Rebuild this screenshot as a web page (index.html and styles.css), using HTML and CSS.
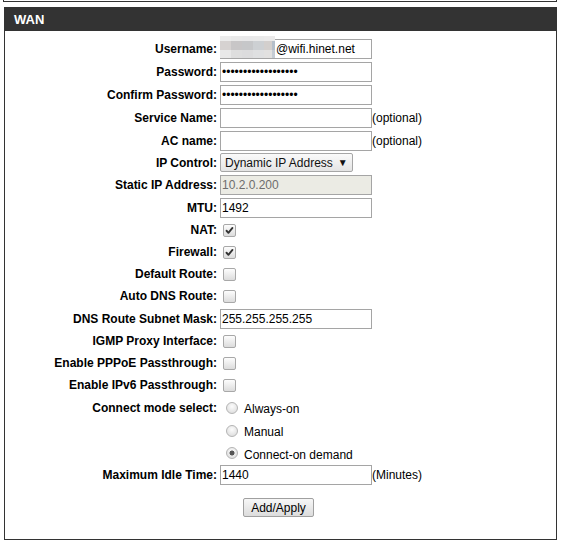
FILE: index.html
```html
<!DOCTYPE html>
<html>
<head>
<meta charset="utf-8">
<link rel="stylesheet" href="styles.css">
</head>
<body>
<div class="page">
  <div class="prevbox"></div>
  <div class="panel">
    <div class="head">WAN</div>
    <div class="body">
      <div class="form">
        <div class="row r23"><label class="lbl">Username:</label><div class="val"><span class="userbox"><span class="blur"><i class="b1"></i><i class="b2"></i><i class="b3"></i><i class="b4"></i><i class="b5"></i><i class="b6"></i><i class="b7"></i><i class="b8"></i><i class="b9"></i><i class="b10"></i><i class="b11"></i><i class="b12"></i><i class="b13"></i><i class="b14"></i><i class="b15"></i></span><span class="utext">@wifi.hinet.net</span></span></div></div>
        <div class="row r23"><label class="lbl">Password:</label><div class="val"><input class="txt" type="password" value="123456789012345678"></div></div>
        <div class="row r23"><label class="lbl">Confirm Password:</label><div class="val"><input class="txt" type="password" value="123456789012345678"></div></div>
        <div class="row r23"><label class="lbl">Service Name:</label><div class="val"><input class="txt" type="text" value=""><span class="note">(optional)</span></div></div>
        <div class="row r23"><label class="lbl">AC name:</label><div class="val"><input class="txt" type="text" value=""><span class="note">(optional)</span></div></div>
        <div class="row r21"><label class="lbl">IP Control:</label><div class="val"><span class="sel">Dynamic IP Address<span class="arrow">&#9660;</span></span></div></div>
        <div class="row r23"><label class="lbl">Static IP Address:</label><div class="val"><input class="txt dis" type="text" value="10.2.0.200" disabled></div></div>
        <div class="row r23"><label class="lbl">MTU:</label><div class="val"><input class="txt" type="text" value="1492"></div></div>
        <div class="row r22"><label class="lbl">NAT:</label><div class="val"><input class="cb" type="checkbox" checked></div></div>
        <div class="row r22"><label class="lbl">Firewall:</label><div class="val"><input class="cb" type="checkbox" checked></div></div>
        <div class="row r22"><label class="lbl">Default Route:</label><div class="val"><input class="cb" type="checkbox"></div></div>
        <div class="row r22"><label class="lbl">Auto DNS Route:</label><div class="val"><input class="cb" type="checkbox"></div></div>
        <div class="row r23"><label class="lbl">DNS Route Subnet Mask:</label><div class="val"><input class="txt" type="text" value="255.255.255.255"></div></div>
        <div class="row r22"><label class="lbl">IGMP Proxy Interface:</label><div class="val"><input class="cb" type="checkbox"></div></div>
        <div class="row r22"><label class="lbl">Enable PPPoE Passthrough:</label><div class="val"><input class="cb" type="checkbox"></div></div>
        <div class="row r22"><label class="lbl">Enable IPv6 Passthrough:</label><div class="val"><input class="cb" type="checkbox"></div></div>
        <div class="row r23"><label class="lbl">Connect mode select:</label><div class="val"><input class="rd" type="radio" name="cm"><span class="rtext">Always-on</span></div></div>
        <div class="row r23"><span class="lbl"></span><div class="val"><input class="rd" type="radio" name="cm"><span class="rtext">Manual</span></div></div>
        <div class="row r22"><span class="lbl"></span><div class="val"><input class="rd" type="radio" name="cm" checked><span class="rtext">Connect-on demand</span></div></div>
        <div class="row r22"><label class="lbl">Maximum Idle Time:</label><div class="val"><input class="txt" type="text" value="1440"><span class="note">(Minutes)</span></div></div>
      </div>
      <div class="actions"><button class="btn" type="button">Add/Apply</button></div>
    </div>
  </div>
</div>
</body>
</html>
```
FILE: styles.css
```css
html, body {
  margin: 0;
  padding: 0;
  background: #fff;
}
body {
  font-family: "Liberation Sans", Arial, sans-serif;
  font-size: 12px;
  color: #000;
}
.page {
  width: 563px;
}
.prevbox {
  margin-left: 3px;
  width: 552px;
  height: 1px;
  border: 1px solid #333;
  border-top: none;
}
.panel {
  margin-top: 5px;
  margin-left: 4px;
  width: 553px;
}
.head {
  height: 24px;
  background: #333;
  color: #fff;
  font-weight: bold;
  font-size: 13px;
  line-height: 25px;
  padding-left: 10px;
}
.body {
  border: 1px solid #333;
  border-top: none;
  height: 509px;
  box-sizing: border-box;
  padding-top: 6px;
}
.form {
  display: flex;
  flex-direction: column;
}
.row {
  display: grid;
  grid-template-columns: 212px 1fr;
  column-gap: 3px;
  align-items: center;
}
.r21 { height: 21px; }
.r22 { height: 22px; }
.r23 { height: 23px; }
.lbl {
  text-align: right;
  font-weight: bold;
  white-space: nowrap;
}
.val {
  display: flex;
  align-items: center;
  white-space: nowrap;
}
.txt {
  box-sizing: border-box;
  width: 152px;
  height: 20px;
  margin: 0;
  padding: 0 1px;
  border: 1px solid #a5a5a5;
  font-family: "Liberation Sans", Arial, sans-serif;
  font-size: 12px;
  color: #000;
  background: #fff;
  outline: none;
}
.txt.dis {
  background: #ebebe4;
  color: #6d6d6d;
}
.note {
  margin-left: 0;
}
.userbox {
  position: relative;
  box-sizing: border-box;
  width: 152px;
  height: 20px;
  border: 1px solid #a5a5a5;
  display: flex;
  align-items: center;
  padding-left: 55px;
}
.utext {
  font-size: 12px;
}
.blur {
  position: absolute;
  left: -1px;
  top: -4px;
  width: 55px;
  height: 22px;
  display: grid;
  grid-template-columns: repeat(5, 1fr);
  grid-template-rows: 5px 9px 8px;
}
.blur i { display: block; }
.b1 { background: #ececec; }
.b2 { background: #e9e9e9; }
.b3 { background: #e8e8e9; }
.b4 { background: #e9e9e9; }
.b5 { background: #ebeaea; }
.b6 { background: #d6d2d1; }
.b7 { background: #c8c6c7; }
.b8 { background: #c6c7c9; }
.b9 { background: #cdd0d3; }
.b10 { background: #d3cfcd; box-shadow: inset -3px 0 0 #b5bfca; }
.b11 { background: #e8e8e8; }
.b12 { background: #dedede; }
.b13 { background: #dcdcdd; }
.b14 { background: #dfe0e1; }
.b15 { background: #e2e1e0; box-shadow: inset -3px 0 0 #c5ccd4; }
.sel {
  box-sizing: border-box;
  display: inline-flex;
  align-items: center;
  height: 19px;
  width: 133px;
  padding-left: 4px;
  border: 1px solid #a6a6a6;
  border-radius: 2px;
  background: linear-gradient(#fafafa, #e4e4e4);
  font-size: 12px;
  color: #111;
}
.arrow {
  font-size: 10px;
  margin-left: 5px;
  color: #111;
}
.cb {
  -webkit-appearance: none;
  appearance: none;
  box-sizing: border-box;
  width: 13px;
  height: 13px;
  margin: 0 0 0 3px;
  border: 1px solid #a8a8a8;
  border-radius: 2px;
  background: linear-gradient(#fdfdfd, #dcdcdc);
}
.cb:checked {
  background: url("data:image/svg+xml,%3Csvg xmlns='http://www.w3.org/2000/svg' width='13' height='13' viewBox='0 0 13 13'%3E%3Cpath d='M3 6.8 L5.2 9.2 L10 3.4' fill='none' stroke='%23333' stroke-width='2.2' stroke-linecap='round' stroke-linejoin='round'/%3E%3C/svg%3E") center/11px 11px no-repeat, linear-gradient(#fdfdfd, #dcdcdc);
}
.rd {
  -webkit-appearance: none;
  appearance: none;
  box-sizing: border-box;
  width: 12px;
  height: 12px;
  margin: 0 0 0 6px;
  border: 1px solid #b4b4b4;
  border-radius: 50%;
  background: radial-gradient(circle at 50% 35%, #fcfcfc, #d8d8d8);
}
.rd:checked {
  background: radial-gradient(circle, #555 0 2.2px, transparent 2.8px), radial-gradient(circle at 50% 35%, #fcfcfc, #d8d8d8);
}
.rtext {
  margin-left: 6px;
  padding-top: 3px;
}
.actions {
  display: flex;
  justify-content: center;
  padding-right: 4px;
  margin-top: 12px;
}
.btn {
  box-sizing: border-box;
  height: 19px;
  width: 71px;
  padding: 0;
  border: 1px solid #a0a0a0;
  border-radius: 2px;
  background: linear-gradient(#f7f7f7, #dcdcdc);
  font-family: "Liberation Sans", Arial, sans-serif;
  font-size: 12px;
  color: #000;
}
```
